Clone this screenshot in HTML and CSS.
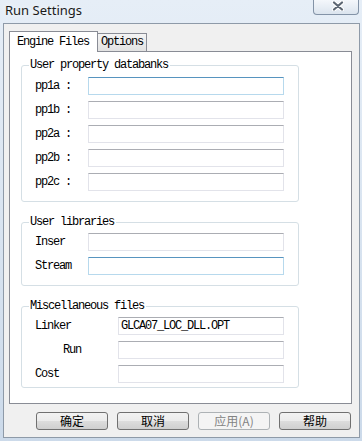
FILE: index.html
```html
<!DOCTYPE html>
<html lang="en">
<head>
    <meta charset="UTF-8">
    <title>Run Settings</title>
    <link rel="stylesheet" href="styles.css">
</head>
<body>
    <div class="window">
        <div class="titlebar">
            <span class="title">Run Settings</span>
            <button class="close" aria-label="Close">
                <svg width="12" height="10" viewBox="0 0 12 10">
                    <path d="M2 1.5 L10 8.5 M10 1.5 L2 8.5" stroke="#ffffff" stroke-width="4.2" stroke-linecap="round"/>
                    <path d="M2 1.5 L10 8.5 M10 1.5 L2 8.5" stroke="#5c6673" stroke-width="2.2" stroke-linecap="round"/>
                </svg>
            </button>
        </div>

        <div class="client">
            <div class="tabs">
                <div class="tab tab-active">Engine Files</div>
                <div class="tab tab-inactive">Options</div>
            </div>

            <div class="panel">
                <div class="group">
                    <div class="group-title">User property databanks</div>
                    <div class="fields fields-first">
                        <span>pp1a :</span><div class="field field-hot"></div>
                        <span>pp1b :</span><div class="field"></div>
                        <span>pp2a :</span><div class="field"></div>
                        <span>pp2b :</span><div class="field"></div>
                        <span>pp2c :</span><div class="field"></div>
                    </div>
                </div>

                <div class="group">
                    <div class="group-title">User libraries</div>
                    <div class="fields">
                        <span>Inser</span><div class="field"></div>
                        <span>Stream</span><div class="field field-hot"></div>
                    </div>
                </div>

                <div class="group group-misc">
                    <div class="group-title">Miscellaneous files</div>
                    <div class="fields fields-misc">
                        <span>Linker</span><div class="field">GLCA07_LOC_DLL.OPT</div>
                        <span class="indent">Run</span><div class="field"></div>
                        <span>Cost</span><div class="field"></div>
                    </div>
                </div>
            </div>

            <div class="buttons">
                <button class="btn">确定</button>
                <button class="btn">取消</button>
                <button class="btn" disabled>应用(A)</button>
                <button class="btn">帮助</button>
            </div>
        </div>
    </div>
</body>
</html>
```

FILE: styles.css
```css
body {
    margin: 0;
    width: 362px;
    height: 441px;
    overflow: hidden;
    background: linear-gradient(#e6eef7, #ccdaea);
    font-family: "Liberation Mono", monospace;
    font-size: 12px;
    color: #000;
}

.window {
    padding-left: 3px;
}

.titlebar {
    display: flex;
    justify-content: space-between;
    align-items: flex-start;
    height: 23px;
    padding: 0 3px 0 2px;
}

.title {
    font-family: "Noto Sans", sans-serif;
    font-size: 13px;
    line-height: 20px;
    color: #1a1a1a;
    text-shadow: 0 0 6px #ffffff;
}

.close {
    width: 46px;
    height: 15px;
    padding: 1px 0 0 4px;
    display: flex;
    justify-content: center;
    align-items: flex-start;
    border: 1px solid #8393a7;
    border-top: none;
    border-radius: 0 0 4px 4px;
    background: linear-gradient(#f4f7fb, #dbe4ee);
}

.client {
    width: 357px;
    height: 415px;
    box-sizing: border-box;
    border: 1px solid #8e9aa8;
    background: #f0f0f0;
}

.tabs {
    display: flex;
    align-items: flex-end;
    margin: 7px 0 0 5px;
}

.tab {
    line-height: 12px;
    letter-spacing: -1.2px;
    border: 1px solid #898c95;
    border-bottom: none;
}

.tab-active {
    position: relative;
    z-index: 1;
    padding: 4px 8px 4px 7px;
    margin-bottom: -1px;
    background: #fff;
}

.tab-inactive {
    padding: 2px 3px 3px 3px;
    border-left: none;
    background: linear-gradient(#f4f4f4, #e2e2e2);
}

.panel {
    margin-left: 5px;
    width: 343px;
    height: 353px;
    box-sizing: border-box;
    padding: 13px 0 0 11px;
    border: 1px solid #898c95;
    background: #fff;
}

.group {
    width: 278px;
    box-sizing: border-box;
    padding: 0 14px 10px 13px;
    border: 1px solid #d5dfe5;
    border-radius: 3px;
}

.group + .group {
    margin-top: 20px;
}

.group-misc {
    padding-bottom: 4px;
}

.group-title {
    display: table;
    margin: -7px 0 0 -6px;
    padding: 0 2px 0 1px;
    line-height: 12px;
    letter-spacing: -1.2px;
    background: #fff;
}

.fields {
    display: grid;
    grid-template-columns: 53px 196px;
    row-gap: 6px;
    align-items: center;
    margin-top: 5px;
    letter-spacing: -1.2px;
    line-height: 12px;
}

.fields-first {
    margin-top: 6px;
}

.fields-misc {
    grid-template-columns: 83px 166px;
}

.indent {
    padding-left: 28px;
}

.field {
    height: 18px;
    box-sizing: border-box;
    padding: 0 2px;
    line-height: 16px;
    border: 1px solid #e2e3ea;
    border-top-color: #abadb3;
    background: #fff;
}

.field-hot {
    border-color: #b7d9ed;
    border-top-color: #5794bf;
}

.buttons {
    display: flex;
    gap: 9px;
    margin: 8px 0 0 32px;
}

.btn {
    width: 72px;
    height: 18px;
    padding: 0;
    border: 1px solid #707070;
    border-radius: 3px;
    background: linear-gradient(#f2f2f2 0%, #ebebeb 50%, #dddddd 50%, #cfcfcf 100%);
    font-family: "Noto Sans CJK SC", sans-serif;
    font-size: 12px;
    line-height: 16px;
    color: #000;
}

.btn:disabled {
    border-color: #adb2b5;
    background: #f4f4f4;
    color: #838383;
}
```
